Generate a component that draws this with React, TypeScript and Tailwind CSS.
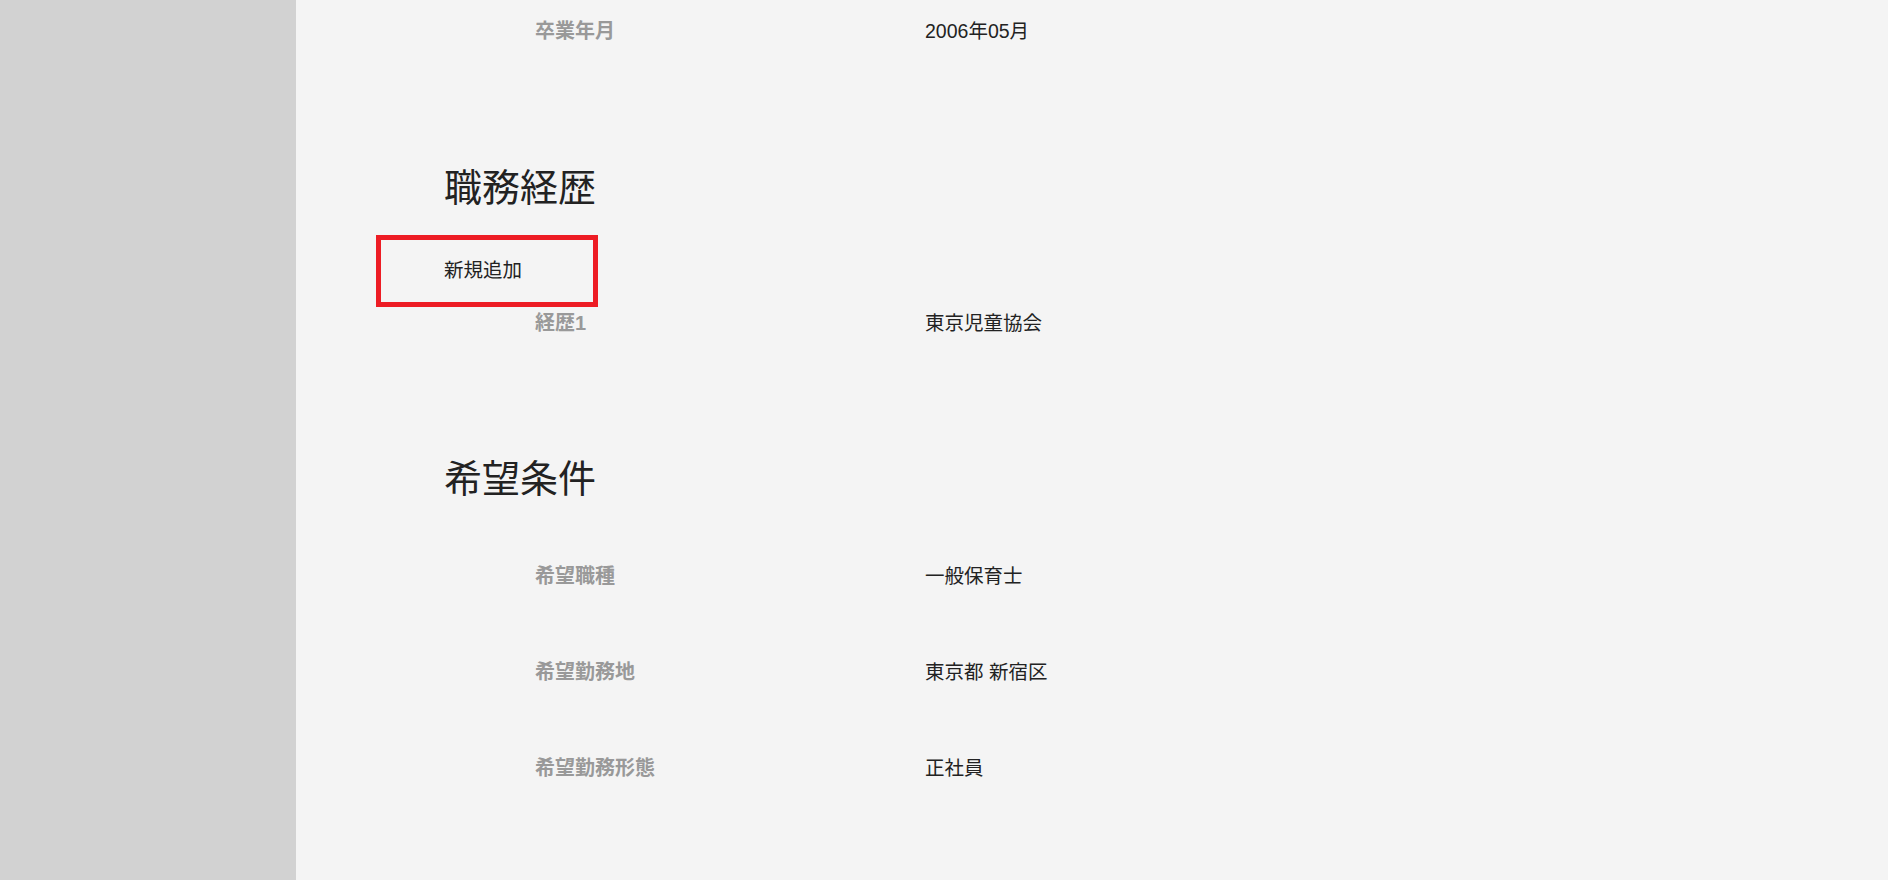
import React from 'react';

const font = { fontFamily: '"Liberation Sans", "Noto Sans CJK JP", sans-serif' };

const Row: React.FC<{ label: string; value: string; h: string }> = ({ label, value, h }) => (
  <div className={`${h} pl-[91px] grid grid-cols-[390px_1fr] items-center`}>
    <p className="text-[20px] leading-[28px] font-bold text-[#999999]">{label}</p>
    <p className="text-[19.5px] leading-[28px] text-[#222222]">{value}</p>
  </div>
);

const App: React.FC = () => {
  return (
    <div className="flex min-h-screen w-full" style={font}>
      <aside className="w-[296px] shrink-0 bg-[#d2d2d2]"></aside>

      <main className="flex-1 bg-[#f4f4f4] pl-[148px]">
        <Row label="卒業年月" value="2006年05月" h="h-[61px]" />

        <section className="mt-[103px]">
          <h2 className="text-[38px] leading-[48px] text-[#222222]">職務経歴</h2>

          <button className="mt-[23px] -ml-[68px] w-[222px] h-[72px] border-[5px] border-[#ed1c24] pl-[63px] text-left text-[19.5px] text-[#222222]">
            新規追加
          </button>

          <Row label="経歴1" value="東京児童協会" h="h-[32px]" />
        </section>

        <section className="mt-[116px] pb-[80px]">
          <h2 className="text-[38px] leading-[48px] text-[#222222]">希望条件</h2>

          <div className="mt-[25px]">
            {[
              { label: '希望職種', value: '一般保育士' },
              { label: '希望勤務地', value: '東京都 新宿区' },
              { label: '希望勤務形態', value: '正社員' },
            ].map((item) => (
              <Row key={item.label} label={item.label} value={item.value} h="h-[96px]" />
            ))}
          </div>
        </section>
      </main>
    </div>
  );
};

export default App;
